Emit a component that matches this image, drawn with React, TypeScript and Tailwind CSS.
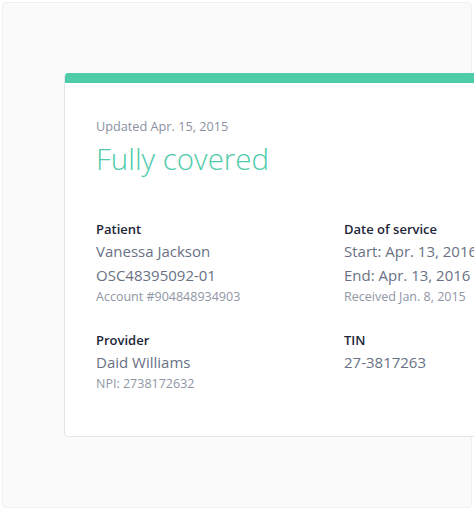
import React from "react";

const font = { fontFamily: '"Open Sans", "Noto Sans", sans-serif' };

function Field({ label, lines }: { label: string; lines: { t: string; small?: boolean }[] }) {
  return (
    <div className="flex flex-col">
      <div className="text-[13px] leading-[20px] font-semibold text-[#1d2638]">{label}</div>
      {lines.map((l, i) =>
        l.small ? (
          <div key={i} className="text-[12.5px] leading-[20px] text-[#8f96a4]">{l.t}</div>
        ) : (
          <div key={i} className="text-[15px] leading-[24px] text-[#697184]">{l.t}</div>
        )
      )}
    </div>
  );
}

export default function App() {
  return (
    <div className="w-[474px] h-[511px] overflow-hidden bg-white p-[2px]" style={font}>
      <div className="h-[506px] w-[470px] rounded-[4px] border border-[#f0f0f0] bg-[#fafafa] pt-[70px] pl-[61px]">
        <div className="w-[460px] rounded-[4px] bg-white border border-[#e3e5e8] border-t-0 overflow-hidden">
          <div className="h-[10px] bg-[#4ecba9] -mx-px" />
          <div className="pl-[31px] pt-[33px] pb-[42px]">
            <div className="text-[12.7px] leading-[20px] text-[#8a91a0]">Updated Apr. 15, 2015</div>
            <div className="mt-[3px] text-[29.5px] leading-[40px] font-light text-[#4ecba9]">Fully covered</div>
            <div className="mt-[40px] grid grid-cols-[248px_1fr] gap-y-[23px]">
              <Field
                label="Patient"
                lines={[
                  { t: "Vanessa Jackson" },
                  { t: "OSC48395092-01" },
                  { t: "Account #904848934903", small: true },
                ]}
              />
              <Field
                label="Date of service"
                lines={[
                  { t: "Start: Apr. 13, 2016" },
                  { t: "End: Apr. 13, 2016" },
                  { t: "Received Jan. 8, 2015", small: true },
                ]}
              />
              <Field
                label="Provider"
                lines={[{ t: "Daid Williams" }, { t: "NPI: 2738172632", small: true }]}
              />
              <Field label="TIN" lines={[{ t: "27-3817263" }]} />
            </div>
          </div>
        </div>
      </div>
    </div>
  );
}
